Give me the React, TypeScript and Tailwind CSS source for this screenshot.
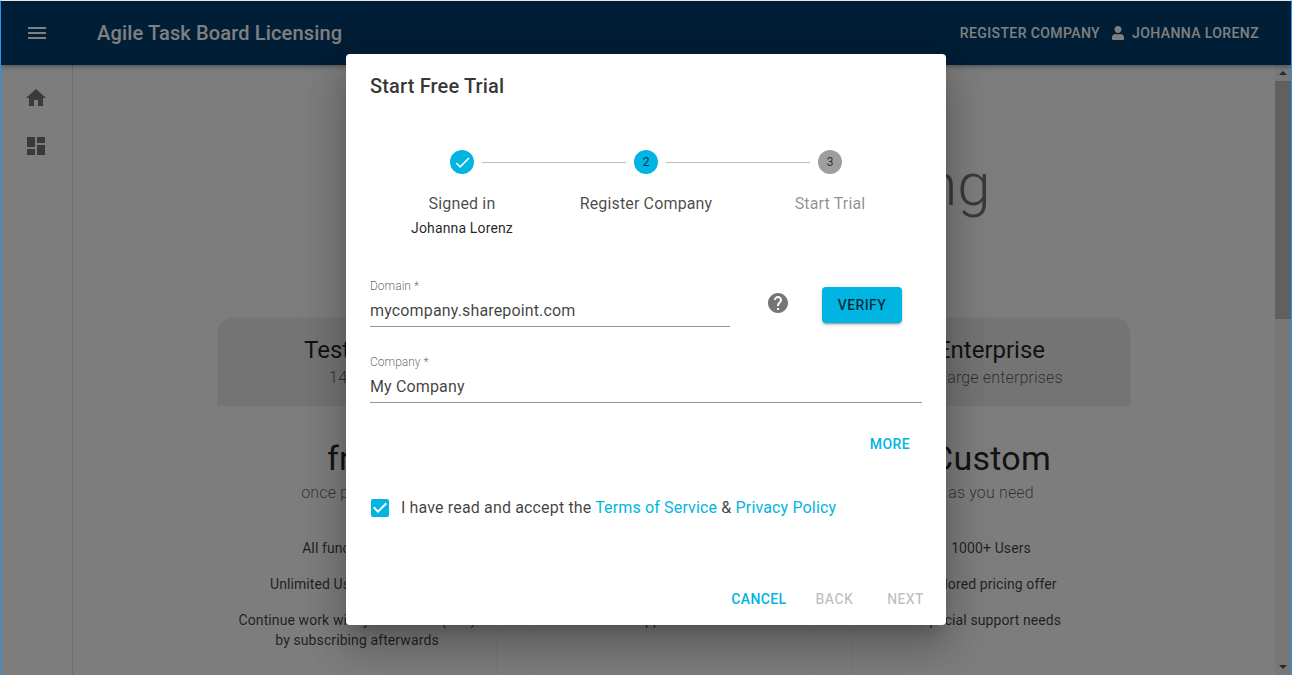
import type { FC } from 'react'
import { FaUser } from 'react-icons/fa'
import { MdCheck, MdCheckBox, MdDashboard, MdHelp, MdHome, MdMenu } from 'react-icons/md'

const roboto = { fontFamily: 'Roboto, sans-serif' }

interface PlanProps {
  title: string
  subtitle: string
  price: string
  period: string
  features: string[]
}

const plans: PlanProps[] = [
  {
    title: 'Test Drive',
    subtitle: '14 days',
    price: 'free',
    period: 'once per tenant',
    features: ['All functionalities', 'Unlimited Users for 14 days', 'Continue work with your boards (trial) by subscribing afterwards'],
  },
  {
    title: 'Standard',
    subtitle: 'for small teams',
    price: 'Monthly',
    period: 'per user',
    features: ['All functionalities', 'Up to 1000 Users', 'Email support for all users'],
  },
  {
    title: 'Enterprise',
    subtitle: 'for large enterprises',
    price: 'Custom',
    period: 'as you need',
    features: ['1000+ Users', 'Tailored pricing offer', 'Special support needs'],
  },
]

const PlanCard: FC<PlanProps> = ({ title, subtitle, price, period, features }) => (
  <div className="w-[278px] h-[400px] shrink-0 bg-[#fafafa] rounded-t-2xl shadow-[0_0_1px_rgba(0,0,0,0.3)] text-center overflow-hidden">
    <div className="h-[88px] bg-[#e8e8e8] pt-[17px]">
      <div className="text-2xl leading-[30px] text-[rgba(0,0,0,0.87)]">{title}</div>
      <div className="mt-px text-base leading-6 tracking-[0.15px] font-light text-[rgba(0,0,0,0.6)]">{subtitle}</div>
    </div>
    <div className="pt-[30px] px-4">
      <div className="text-[34px] leading-[44px] tracking-[0.25px] text-[rgba(0,0,0,0.87)]">{price}</div>
      <div className="mt-px text-base leading-6 tracking-[0.15px] font-light text-[rgba(0,0,0,0.6)] mb-[33px]">{period}</div>
      {features.map((f) => (
        <div key={f} className="text-sm leading-5 tracking-[0.1px] mb-4 text-[rgba(0,0,0,0.75)]">{f}</div>
      ))}
    </div>
  </div>
)

const Step: FC<{ label: string; sub?: string; state: 'done' | 'active' | 'todo'; n: number }> = ({ label, sub, state, n }) => (
  <div className="w-[184px] relative flex flex-col items-center">
    {n > 1 && <div className="absolute left-[-72px] top-[12px] w-[144px] h-px bg-[#bdbdbd]" />}
    <div className={`w-6 h-6 rounded-full flex items-center justify-center text-xs ${state === 'todo' ? 'bg-[#9e9e9e]' : 'bg-[#00b5e2]'} text-[rgba(0,0,0,0.7)]`}>
      {state === 'done' ? <MdCheck className="w-[19px] h-[19px] text-white" /> : n}
    </div>
    <div className={`mt-[18px] text-base leading-6 tracking-[0.15px] ${state === 'todo' ? 'text-[rgba(0,0,0,0.45)]' : 'text-[rgba(0,0,0,0.72)]'}`}>
      {label}
    </div>
    {sub && <div className="text-sm leading-6 tracking-[0.15px] text-[rgba(0,0,0,0.87)]">{sub}</div>}
  </div>
)

const Field: FC<{ label: string; value: string; className: string }> = ({ label, value, className }) => (
  <div className={`${className} border-b border-[#949494]`}>
    <div className="text-xs leading-[14px] font-light text-[rgba(0,0,0,0.6)]">{label}</div>
    <div className="text-base leading-6 tracking-[0.15px] mt-[6px] pb-[3px] text-[rgba(0,0,0,0.75)]">{value}</div>
  </div>
)

export default function App() {
  return (
    <div style={roboto} className="relative h-[675px] overflow-hidden flex flex-col bg-[#fafafa] border-x border-x-[#2196f3] border-t border-t-[#e8e8e8]">
      {/* App bar */}
      <header className="h-[64px] shrink-0 bg-[#003c6c] text-white flex items-center z-10 shadow-[0_2px_4px_rgba(0,0,0,0.3)]">
        <MdMenu className="w-6 h-6 ml-6 text-white" />
        <div className="ml-[48px] text-xl font-medium tracking-[0.15px]">Agile Task Board Licensing</div>
        <div className="ml-auto mr-8 flex items-center text-sm font-medium tracking-[0.4px]">
          <span>REGISTER COMPANY</span>
          <FaUser className="w-[14px] h-[14px] ml-[11px] mr-[7px]" />
          <span>JOHANNA LORENZ</span>
        </div>
      </header>

      <div className="flex-1 flex min-h-0">
        {/* Drawer */}
        <aside className="w-[72px] shrink-0 border-r border-[#dddddd] flex flex-col items-center pt-[21px] pr-px gap-6">
          <MdHome className="w-6 h-6 text-[#757575]" />
          <MdDashboard className="w-6 h-6 text-[#757575]" />
        </aside>

        {/* Page */}
        <main className="flex-1 overflow-hidden flex flex-col items-center">
          <h1 className="mt-[84px] text-[60px] leading-[72px] font-light text-[rgba(0,0,0,0.54)] whitespace-nowrap">Agile Task Board Pricing</h1>
          <div className="mt-[97px] flex gap-[39px]">
            {plans.map((p) => (
              <PlanCard key={p.title} {...p} />
            ))}
          </div>
        </main>

        {/* Scrollbar */}
        <div className="w-4 shrink-0 bg-[#f1f1f1] flex flex-col items-center">
          <div className="h-4 flex items-center"><div className="w-0 h-0 border-x-4 border-x-transparent border-b-4 border-b-[#505050]" /></div>
          <div className="w-full h-[238px] bg-[#c1c1c1]" />
          <div className="flex-1" />
          <div className="h-4 flex items-center"><div className="w-0 h-0 border-x-4 border-x-transparent border-t-4 border-t-[#505050]" /></div>
        </div>
      </div>

      {/* Backdrop + dialog */}
      <div className="absolute inset-0 z-20 bg-black/50 flex justify-center items-start pt-[53px]">
        <div className="w-[600px] h-[571px] bg-white rounded shadow-[0_11px_15px_-7px_rgba(0,0,0,0.2),0_24px_38px_3px_rgba(0,0,0,0.14),0_9px_46px_8px_rgba(0,0,0,0.12)] flex flex-col">
          <div className="h-[64px] px-6 flex items-center text-xl font-medium tracking-[0.15px] text-[rgba(0,0,0,0.8)]">Start Free Trial</div>

          <div className="px-6 flex-1 flex flex-col">
            <div className="flex mt-[32px]">
              <Step n={1} state="done" label="Signed in" sub="Johanna Lorenz" />
              <Step n={2} state="active" label="Register Company" />
              <Step n={3} state="todo" label="Start Trial" />
            </div>

            <div className="flex mt-[39px] items-start">
              <Field label="Domain *" value="mycompany.sharepoint.com" className="w-[360px]" />
              <MdHelp className="w-6 h-6 ml-[36px] mt-[12px] text-[#757575]" />
              <button className="ml-[32px] mt-[8px] w-[80px] h-9 rounded bg-[#00b5e2] text-sm font-medium tracking-[0.4px] text-[rgba(0,0,0,0.75)] shadow-[0_3px_1px_-2px_rgba(0,0,0,0.2),0_2px_2px_0_rgba(0,0,0,0.14),0_1px_5px_0_rgba(0,0,0,0.12)]">
                VERIFY
              </button>
            </div>

            <Field label="Company *" value="My Company" className="w-full mt-[28px]" />

            <div className="flex justify-end mt-[31px] pr-3 text-sm font-medium tracking-[0.4px] leading-5 text-[#00b5e2]">MORE</div>

            <div className="flex items-center mt-[42px] text-base leading-6 tracking-[0.15px] text-[rgba(0,0,0,0.75)]">
              <MdCheckBox className="w-6 h-6 -ml-0.5 mr-[9px] text-[#00b5e2]" />
              <span>
                I have read and accept the <span className="text-[#00b5e2]">Terms of Service</span> &amp; <span className="text-[#00b5e2]">Privacy Policy</span>
              </span>
            </div>
          </div>

          <div className="h-[44px] mb-[4px] flex items-center text-sm font-medium tracking-[0.4px] leading-5 pr-[22px] justify-end">
            <span className="text-[#00b5e2]">CANCEL</span>
            <span className="ml-[29px] text-[rgba(0,0,0,0.26)]">BACK</span>
            <span className="ml-[34px] text-[rgba(0,0,0,0.26)]">NEXT</span>
          </div>
        </div>
      </div>
    </div>
  )
}
